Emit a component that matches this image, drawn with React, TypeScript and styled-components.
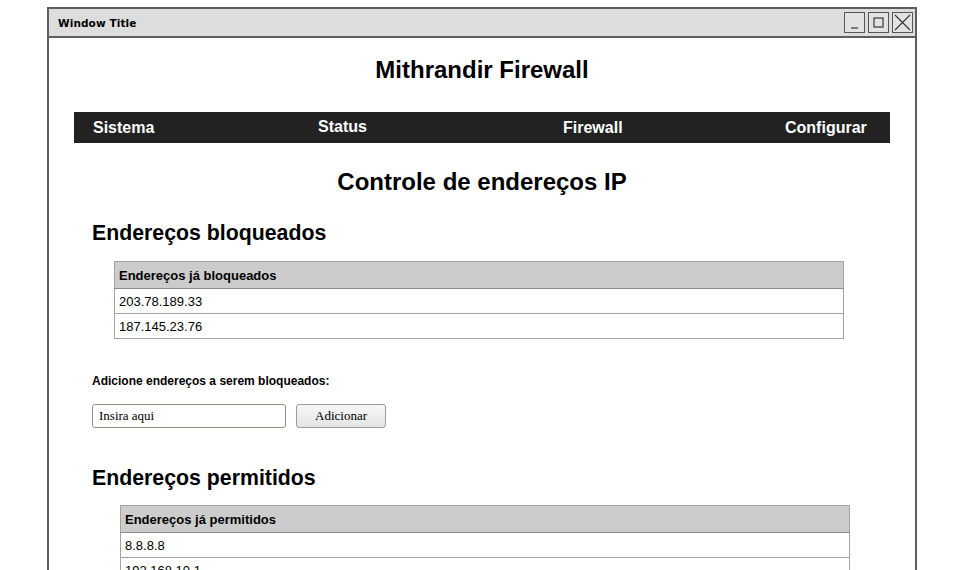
import React from "react";
import styled, { createGlobalStyle } from "styled-components";

const Global = createGlobalStyle`
  html, body { margin: 0; padding: 0; background: #ffffff; overflow: hidden; }
  body { font-family: "Liberation Sans", Arial, sans-serif; color: #000; }
`;

const Window = styled.div`
  margin: 7px 0 0 47px;
  width: 866px;
  min-height: 620px;
  border: 2px solid #5e5e5e;
  background: #ffffff;
`;

const TitleBar = styled.div`
  height: 27px;
  background: #dddddd;
  border-bottom: 2px solid #5e5e5e;
  display: flex;
  align-items: center;
  justify-content: space-between;
  padding: 0 2px 0 9px;
`;

const TitleText = styled.span`
  font-family: "DejaVu Sans", sans-serif;
  font-weight: bold;
  font-size: 10.5px;
  letter-spacing: 0.1px;
  color: #000;
`;

const WinButtons = styled.div`
  display: flex;
  gap: 3px;
`;

const WinButton = styled.div`
  width: 19px;
  height: 19px;
  border: 1.5px solid #555;
  background: #e2e2e2;
  display: flex;
  align-items: center;
  justify-content: center;
`;

const Content = styled.div`
  padding: 18px 25px 0 25px;
`;

const PageTitle = styled.h1`
  margin: 0;
  font-size: 24px;
  line-height: 28px;
  font-weight: bold;
  text-align: center;
`;

const NavBar = styled.nav`
  margin-top: 28px;
  height: 31px;
  background: #222222;
  display: grid;
  grid-template-columns: 225px 245px 222px auto;
  align-items: center;
  padding-left: 19px;
`;

const NavItem = styled.span<{ $raise?: number }>`
  color: #ffffff;
  font-weight: bold;
  font-size: 16px;
  line-height: 18px;
  position: relative;
  top: ${(p) => -(p.$raise ?? 0)}px;
`;

const SectionTitle = styled.h2`
  margin: 25px 0 0;
  font-size: 24px;
  line-height: 28px;
  font-weight: bold;
  text-align: center;
`;

const SubTitle = styled.h3<{ $top: number }>`
  margin: ${(p) => p.$top}px 0 0 18px;
  font-size: 21.3px;
  line-height: 24px;
  font-weight: bold;
`;

const Table = styled.table<{ $left: number; $top: number }>`
  margin: ${(p) => p.$top}px 0 0 ${(p) => p.$left}px;
  width: 730px;
  border-collapse: collapse;
  font-size: 13px;
`;

const Th = styled.th`
  height: 26px;
  padding: 0 0 0 4px;
  background: #cccccc;
  border: 1px solid #a3a3a3;
  border-bottom-color: #8c8c8c;
  text-align: left;
  font-weight: bold;
`;

const Td = styled.td`
  height: 24px;
  padding: 0 0 0 4px;
  border: 1px solid #a3a3a3;
`;

const Label = styled.div`
  margin: 35px 0 0 18px;
  font-size: 12px;
  line-height: 14px;
  font-weight: bold;
`;

const FormRow = styled.div`
  margin: 16px 0 0 18px;
  display: flex;
  gap: 10px;
`;

const Input = styled.input`
  box-sizing: border-box;
  width: 194px;
  height: 24px;
  border: 1px solid #9a8e80;
  border-radius: 3px;
  padding: 0 6px;
  font-family: "Liberation Serif", "Times New Roman", serif;
  font-size: 13px;
  color: #000;
  outline: none;
  &::placeholder { color: #000; }
`;

const Button = styled.button`
  box-sizing: border-box;
  width: 90px;
  height: 24px;
  border: 1px solid #a29a90;
  border-radius: 3px;
  background: linear-gradient(#f7f7f7, #e4e4e4);
  font-family: "Liberation Serif", "Times New Roman", serif;
  font-size: 13px;
  color: #000;
  padding: 0;
`;

const blocked = ["203.78.189.33", "187.145.23.76"];
const allowed = ["8.8.8.8", "192.168.10.1"];

export default function App() {
  return (
    <>
      <Global />
      <Window>
        <TitleBar>
          <TitleText>Window Title</TitleText>
          <WinButtons>
            <WinButton>
              <svg width="15" height="15" viewBox="0 0 15 15">
                <line x1="4" y1="13" x2="11" y2="13" stroke="#444" strokeWidth="1.3" />
              </svg>
            </WinButton>
            <WinButton>
              <svg width="15" height="15" viewBox="0 0 15 15">
                <rect x="3" y="3" width="9" height="9" fill="none" stroke="#444" strokeWidth="1.3" />
              </svg>
            </WinButton>
            <WinButton>
              <svg width="17" height="17" viewBox="0 0 17 17">
                <path d="M1 1 L16 16 M16 1 L1 16" stroke="#333" strokeWidth="1.1" />
              </svg>
            </WinButton>
          </WinButtons>
        </TitleBar>
        <Content>
          <PageTitle>Mithrandir Firewall</PageTitle>
          <NavBar>
            <NavItem>Sistema</NavItem>
            <NavItem $raise={1}>Status</NavItem>
            <NavItem>Firewall</NavItem>
            <NavItem>Configurar</NavItem>
          </NavBar>
          <SectionTitle>Controle de endereços IP</SectionTitle>
          <SubTitle $top={25}>Endereços bloqueados</SubTitle>
          <Table $left={40} $top={16}>
            <thead>
              <tr><Th>Endereços já bloqueados</Th></tr>
            </thead>
            <tbody>
              {blocked.map((ip) => (
                <tr key={ip}><Td>{ip}</Td></tr>
              ))}
            </tbody>
          </Table>
          <Label>Adicione endereços a serem bloqueados:</Label>
          <FormRow>
            <Input placeholder="Insira aqui" />
            <Button>Adicionar</Button>
          </FormRow>
          <SubTitle $top={38}>Endereços permitidos</SubTitle>
          <Table $left={46} $top={15}>
            <thead>
              <tr><Th>Endereços já permitidos</Th></tr>
            </thead>
            <tbody>
              {allowed.map((ip) => (
                <tr key={ip}><Td>{ip}</Td></tr>
              ))}
            </tbody>
          </Table>
        </Content>
      </Window>
    </>
  );
}
